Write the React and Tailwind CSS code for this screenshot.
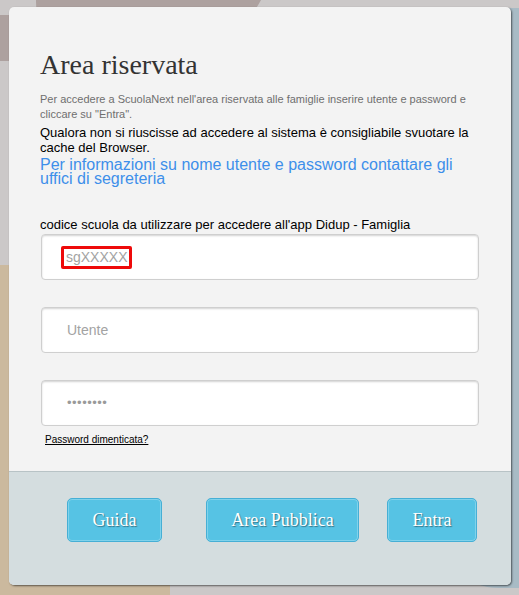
import React from "react";

const Field = ({ children }) => (
  <div className="flex h-[46px] w-[438px] items-center rounded-[4px] border border-[#cfcfcf] bg-white pl-[25px] font-['Liberation_Sans',Arial,sans-serif] text-[14px] text-[#a3a3a3] shadow-[inset_0_1px_2px_rgba(0,0,0,0.18)]">
    {children}
  </div>
);

const Btn = ({ label, className }) => (
  <button
    type="button"
    className={`flex h-[44px] items-center justify-center rounded-[5px] border border-[#46afd5] bg-[#56c3e4] font-['Liberation_Serif','Times_New_Roman',serif] text-[18px] text-white shadow-[inset_0_0_0_1px_rgba(255,255,255,0.25)] [text-shadow:1px_1px_1px_rgba(0,0,0,0.4)] ${className}`}
  >
    {label}
  </button>
);

export default function App() {
  return (
    <div className="relative h-[595px] w-full overflow-hidden bg-[#cbc8c8] pl-[9px] pt-[7px]">
      {/* blurred background shapes */}
      <div className="absolute left-[36px] top-[-200px] h-[262px] w-[240px] rounded-br-[120px] rounded-bl-[60px] bg-[#ada19f]" />
      <div className="absolute left-[-60px] top-[15px] h-[46px] w-[120px] rounded-[20px] bg-[#ada19f]" />
      <div className="absolute left-[-40px] top-[265px] h-[400px] w-[210px] rounded-tl-[30px] bg-[#cbb99e]" />
      <div className="absolute right-[-80px] top-[8px] h-[580px] w-[160px] rounded-[60px] bg-[#a8bbc5]" />

      <div className="relative z-10 flex h-[578px] w-[502px] flex-col overflow-hidden rounded-[5px] bg-[#f3f3f3] shadow-[1px_1px_2px_rgba(0,0,0,0.55)]">
        <div className="flex-1 pl-[31px] pt-[42px] font-['Liberation_Sans',Arial,sans-serif]">
          <h1 className="font-['Liberation_Serif','Times_New_Roman',serif] text-[28px] leading-[32px] text-[#333]">
            Area riservata
          </h1>
          <p className="mt-[11px] w-[440px] text-[11px] leading-[15px] text-[#6f6f6f]">
            Per accedere a ScuolaNext nell'area riservata alle famiglie inserire utente e password e cliccare su "Entra".
          </p>
          <p className="mt-[3px] w-[440px] text-[13px] leading-[15px] text-black">
            Qualora non si riuscisse ad accedere al sistema è consigliabile svuotare la cache del Browser.
          </p>
          <p className="mt-[3px] w-[440px] text-[16px] leading-[14px] text-[#3d8fea]">
            Per informazioni su nome utente e password contattare gli uffici di segreteria
          </p>
          <p className="mt-[31px] text-[13px] leading-[16px] text-black">
            codice scuola da utilizzare per accedere all'app Didup - Famiglia
          </p>
          <div className="mt-[1px] ml-[1px]">
            <Field>
              <span className="-ml-[6px] rounded-[2px] border-[3px] border-[#ee0a0a] px-[2px] leading-[17px]">
                sgXXXXX
              </span>
            </Field>
          </div>
          <div className="mt-[27px] ml-[1px]">
            <Field>Utente</Field>
          </div>
          <div className="mt-[27px] ml-[1px]">
            <Field>
              <span className="text-[13px] tracking-[0.5px] text-[#9a9a9a]">••••••••</span>
            </Field>
          </div>
          <a href="#" className="ml-[5px] mt-[3px] inline-block text-[10px] leading-[12px] text-black underline">
            Password dimenticata?
          </a>
        </div>

        <div className="flex h-[114px] items-start border-t border-[#b8c3c6] bg-[#d4dddf] pt-[26px]">
          <Btn label="Guida" className="ml-[58px] w-[95px]" />
          <Btn label="Area Pubblica" className="ml-[44px] w-[153px]" />
          <Btn label="Entra" className="ml-[28px] w-[90px]" />
        </div>
      </div>
    </div>
  );
}
